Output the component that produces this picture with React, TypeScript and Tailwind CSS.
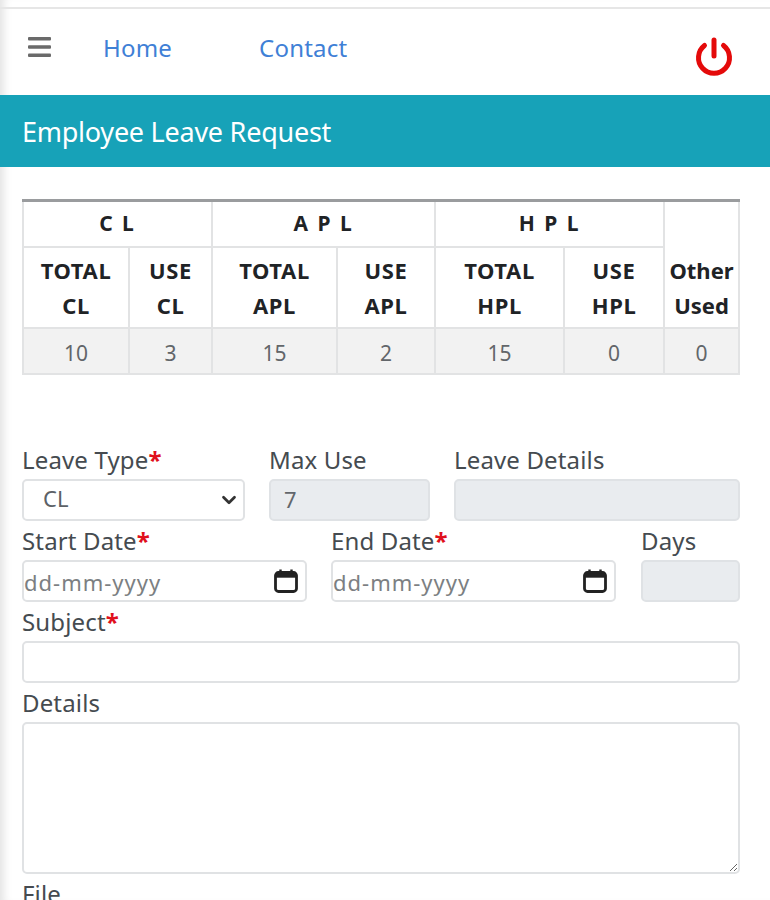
import { ChevronDown } from 'lucide-react'

const font = { fontFamily: '"Noto Sans", "Open Sans", sans-serif' }

function Req() {
  return <span className="font-bold text-[#e0101c]">*</span>
}

function FieldLabel({ children }: { children: React.ReactNode }) {
  return <label className="block h-[39px] pt-[2px] text-[24px] leading-[36px] text-[#454b50] whitespace-nowrap tracking-[0.15px]">{children}</label>
}

function Calendar() {
  return (
    <svg className="w-[26px] h-[26px] shrink-0 text-[#222]" viewBox="0 0 26 26" fill="none" stroke="currentColor">
      <rect x="2.5" y="4.5" width="21" height="19" rx="3" strokeWidth="2.8" />
      <path d="M2.5 7.5h21" strokeWidth="4.4" />
      <path d="M7.5 1.5v4M18.5 1.5v4" strokeWidth="2.4" />
    </svg>
  )
}

function DateInput() {
  return (
    <div className="flex items-center h-[42px] pr-[6px] bg-white border-2 border-[#e0e2e4] rounded-[5px]">
      <input placeholder="dd-mm-yyyy" className="w-full min-w-0 pt-[3px] text-[22px] tracking-[1px] outline-none placeholder:text-[#7c7f82]" />
      <Calendar />
    </div>
  )
}

const th = 'border-2 border-[#e2e3e4] border-t-[3px] border-t-[#9a9c9e] font-bold text-[21px] text-[#1f2326]'
const sub = 'border-2 border-[#e2e3e4] font-bold text-[22px] leading-[35px] tracking-[0.6px] text-[#1f2326]'
const td = 'border-2 border-[#e2e3e4] pt-[7px] text-[21px] text-[#62666a] font-normal'

const values = ['10', '3', '15', '2', '15', '0', '0']

export default function App() {
  return (
    <div style={font} className="min-h-[900px] h-[900px] overflow-hidden bg-white shadow-[inset_10px_0_8px_-6px_#e4e4e4]">
      <div className="h-[9px] border-b-2 border-[#e6e6e6]" />
      <nav className="flex items-start h-[86px] pl-[28px] pr-[36px]">
        <svg className="mt-[28px] w-[23px] h-[20px] text-[#6a6a6a]" viewBox="0 0 23 20" fill="currentColor">
          <rect y="0" width="23" height="3.4" rx="1" />
          <rect y="8.3" width="23" height="3.4" rx="1" />
          <rect y="16.6" width="23" height="3.4" rx="1" />
        </svg>
        <a className="ml-[52px] mt-[21px] text-[24px] leading-[36px] text-[#3f80d6] tracking-[0.2px]">Home</a>
        <a className="ml-[87px] mt-[21px] text-[24px] leading-[36px] text-[#3f80d6] tracking-[0.2px]">Contact</a>
        <svg className="ml-auto mt-[26px] w-[40px] h-[42px] text-[#e40a0a]" viewBox="0 0 40 42" fill="none" stroke="currentColor" strokeWidth="5" strokeLinecap="round">
          <path d="M20 5v16" />
          <path d="M10.5 10.5a15.5 15.5 0 1 0 19 0" />
        </svg>
      </nav>
      <div className="h-[72px] flex items-center pl-[22px] pt-[2px] bg-[#17a2b8] text-white text-[27px] tracking-[-0.25px]">
        Employee Leave Request
      </div>

      <div className="pt-[32px] pl-[22px] pr-[30px]">
        <table className="w-[716px] table-fixed border-collapse text-center">
          <colgroup>
            <col className="w-[106px]" />
            <col className="w-[83px]" />
            <col className="w-[125px]" />
            <col className="w-[98px]" />
            <col className="w-[129px]" />
            <col className="w-[100px]" />
            <col className="w-[75px]" />
          </colgroup>
          <thead>
            <tr className="h-[46px]">
              <th colSpan={2} className={th + ' tracking-[2px]'}>C L</th>
              <th colSpan={2} className={th + ' tracking-[2px]'}>A P L</th>
              <th colSpan={2} className={th + ' tracking-[2px]'}>H P L</th>
              <th rowSpan={2} className={th + ' text-[22px] leading-[35px] pt-[47px]'}>Other<br />Used</th>
            </tr>
            <tr className="h-[81px]">
              <th className={sub + ' pt-[1px]'}>TOTAL<br />CL</th>
              <th className={sub + ' pt-[1px]'}>USE<br />CL</th>
              <th className={sub + ' pt-[1px]'}>TOTAL<br />APL</th>
              <th className={sub + ' pt-[1px]'}>USE<br />APL</th>
              <th className={sub + ' pt-[1px]'}>TOTAL<br />HPL</th>
              <th className={sub + ' pt-[1px]'}>USE<br />HPL</th>
            </tr>
          </thead>
          <tbody>
            <tr className="h-[46px] bg-[#f2f2f2]">
              {values.map((v, i) => (
                <td key={i} className={td}>{v}</td>
              ))}
            </tr>
          </tbody>
        </table>

        <div className="mt-[65px] flex gap-[24px]">
          <div className="w-[223px]">
            <FieldLabel>Leave Type<Req /></FieldLabel>
            <div className="relative">
              <select className="w-full h-[42px] pl-[19px] pb-[3px] appearance-none bg-white border-2 border-[#e0e2e4] rounded-[5px] text-[22px] text-[#5c6166] outline-none">
                <option>CL</option>
              </select>
              <ChevronDown className="absolute right-[5px] top-[10px] w-[22px] h-[22px] text-[#333] pointer-events-none" strokeWidth={3} />
            </div>
          </div>
          <div className="w-[161px]">
            <FieldLabel>Max Use</FieldLabel>
            <input readOnly value="7" className="w-full h-[42px] pl-[13px] pb-[2px] bg-[#e9ecef] border-2 border-[#dfe2e5] rounded-[5px] text-[22px] text-[#62676c] outline-none" />
          </div>
          <div className="w-[286px]">
            <FieldLabel>Leave Details</FieldLabel>
            <input readOnly className="w-full h-[42px] bg-[#e9ecef] border-2 border-[#dfe2e5] rounded-[5px] outline-none" />
          </div>
        </div>

        <div className="flex gap-[24px]">
          <div className="w-[285px]">
            <FieldLabel>Start Date<Req /></FieldLabel>
            <DateInput />
          </div>
          <div className="w-[285px]">
            <FieldLabel>End Date<Req /></FieldLabel>
            <DateInput />
          </div>
          <div className="w-[99px] ml-[1px]">
            <FieldLabel>Days</FieldLabel>
            <input readOnly className="w-full h-[42px] bg-[#e9ecef] border-2 border-[#dfe2e5] rounded-[5px] outline-none" />
          </div>
        </div>

        <FieldLabel>Subject<Req /></FieldLabel>
        <input className="block w-[718px] h-[42px] bg-white border-2 border-[#e0e2e4] rounded-[5px] outline-none" />

        <FieldLabel>Details</FieldLabel>
        <textarea className="block w-[718px] h-[152px] bg-white border-2 border-[#e0e2e4] rounded-[5px] outline-none" />

        <FieldLabel>File</FieldLabel>
      </div>
    </div>
  )
}
